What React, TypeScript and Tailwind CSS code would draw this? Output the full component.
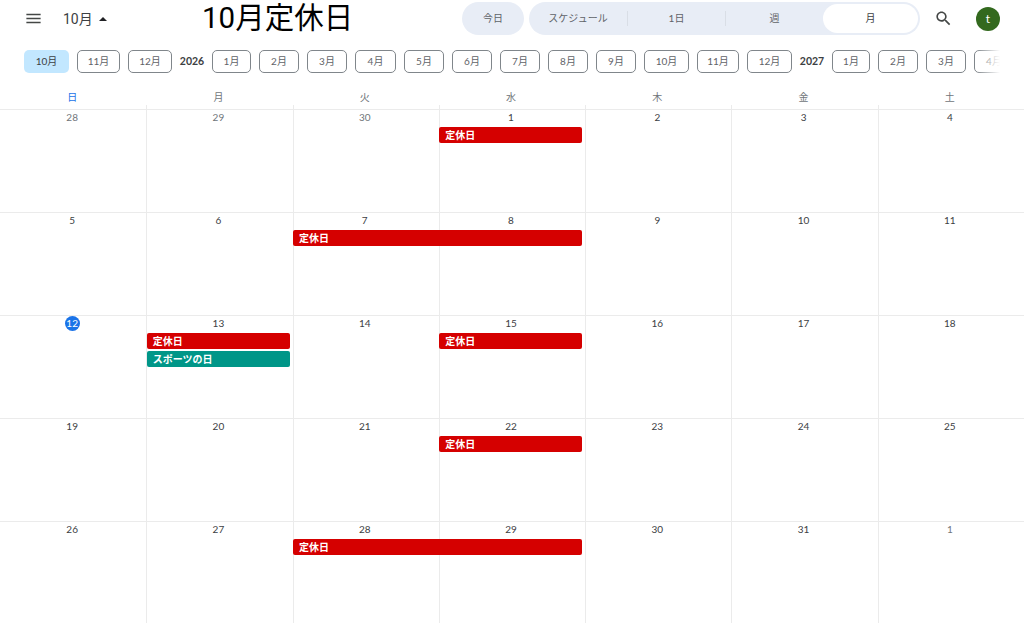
const FONT = "font-['Lato','Noto_Sans_CJK_JP',sans-serif]";

type Chip = { label: string; width: string; year?: boolean; active?: boolean };

const CHIPS: Chip[] = [
  { label: '10月', width: 'w-[45px]', active: true },
  { label: '11月', width: 'w-[43px]' },
  { label: '12月', width: 'w-[44px]' },
  { label: '2026', width: 'w-6', year: true },
  { label: '1月', width: 'w-[39px]' },
  { label: '2月', width: 'w-10' },
  { label: '3月', width: 'w-10' },
  { label: '4月', width: 'w-[41px]' },
  { label: '5月', width: 'w-10' },
  { label: '6月', width: 'w-10' },
  { label: '7月', width: 'w-10' },
  { label: '8月', width: 'w-10' },
  { label: '9月', width: 'w-10' },
  { label: '10月', width: 'w-[45px]' },
  { label: '11月', width: 'w-[42px]' },
  { label: '12月', width: 'w-[45px]' },
  { label: '2027', width: 'w-6', year: true },
  { label: '1月', width: 'w-[38px]' },
  { label: '2月', width: 'w-10' },
  { label: '3月', width: 'w-10' },
  { label: '4月', width: 'w-10' },
];

const WEEKDAYS = ['日', '月', '火', '水', '木', '金', '土'];

type CalEvent = { label: string; col: string; color: string; row: string };

const RED = 'bg-[#d50000]';

const WEEKS: { days: { n: number; muted?: boolean; today?: boolean }[]; events: CalEvent[] }[] = [
  {
    days: [{ n: 28, muted: true }, { n: 29, muted: true }, { n: 30, muted: true }, { n: 1 }, { n: 2 }, { n: 3 }, { n: 4 }],
    events: [{ label: '定休日', col: 'col-start-4 col-span-1', color: RED, row: 'row-start-2' }],
  },
  {
    days: [{ n: 5 }, { n: 6 }, { n: 7 }, { n: 8 }, { n: 9 }, { n: 10 }, { n: 11 }],
    events: [{ label: '定休日', col: 'col-start-3 col-span-2', color: RED, row: 'row-start-2' }],
  },
  {
    days: [{ n: 12, today: true }, { n: 13 }, { n: 14 }, { n: 15 }, { n: 16 }, { n: 17 }, { n: 18 }],
    events: [
      { label: '定休日', col: 'col-start-2 col-span-1', color: RED, row: 'row-start-2' },
      { label: 'スポーツの日', col: 'col-start-2 col-span-1', color: 'bg-[#009688]', row: 'row-start-3' },
      { label: '定休日', col: 'col-start-4 col-span-1', color: RED, row: 'row-start-2' },
    ],
  },
  {
    days: [{ n: 19 }, { n: 20 }, { n: 21 }, { n: 22 }, { n: 23 }, { n: 24 }, { n: 25 }],
    events: [{ label: '定休日', col: 'col-start-4 col-span-1', color: RED, row: 'row-start-2' }],
  },
  {
    days: [{ n: 26 }, { n: 27 }, { n: 28 }, { n: 29 }, { n: 30 }, { n: 31 }, { n: 1, muted: true }],
    events: [{ label: '定休日', col: 'col-start-3 col-span-2', color: RED, row: 'row-start-2' }],
  },
];

const COL_START = ['col-start-1', 'col-start-2', 'col-start-3', 'col-start-4', 'col-start-5', 'col-start-6', 'col-start-7'];

export default function App() {
  return (
    <div className={`${FONT} w-[1024px] h-[623px] overflow-hidden bg-white text-[#3c4043]`}>
      {/* Top bar */}
      <header className="flex items-center h-[37px]">
        <svg className="ml-6 w-[19px] h-[19px] text-[#444746]" viewBox="0 0 24 24" fill="currentColor">
          <path d="M3 18h18v-2H3v2zm0-5h18v-2H3v2zm0-7v2h18V6H3z" />
        </svg>
        <span className="ml-[20px] w-[30px] text-sm text-[#3c4043] font-['Roboto','Noto_Sans_CJK_JP',sans-serif]">10月</span>
        <span className="ml-[6px] w-0 h-0 border-x-4 border-x-transparent border-b-[4px] border-b-[#202124]" />
        <h1 className="ml-[95px] w-[260px] text-[29.5px] leading-none text-black font-['Roboto','Noto_Sans_CJK_JP',sans-serif]">10月定休日</h1>
        <button className="w-[62px] h-[33px] rounded-full bg-[#e8edf6] text-[10px] text-[#5f6368]">今日</button>
        <div className="ml-[5px] w-[391px] h-[33px] rounded-full bg-[#e8edf6] flex items-center text-[10px] text-[#5f6368]">
          <span className="w-[99px] text-center border-r border-[#d9dee6]">スケジュール</span>
          <span className="w-[98px] text-center border-r border-[#d9dee6]">1日</span>
          <span className="w-[97px] text-center">週</span>
          <span className="flex-1 h-[29px] mr-[2px] rounded-full bg-white flex items-center justify-center text-[#3c4043]">月</span>
        </div>
        <svg className="ml-[14px] w-[19px] h-[19px] text-[#444746]" viewBox="0 0 24 24" fill="currentColor">
          <path d="M15.5 14h-.79l-.28-.27C15.41 12.59 16 11.11 16 9.5 16 5.91 13.09 3 9.5 3S3 5.91 3 9.5 5.91 16 9.5 16c1.61 0 3.09-.59 4.23-1.57l.27.28v.79l5 4.99L20.49 19l-4.99-5zm-6 0C7.01 14 5 11.99 5 9.5S7.01 5 9.5 5 14 7.01 14 9.5 11.99 14 9.5 14z" />
        </svg>
        <div className="ml-[23px] w-6 h-6 rounded-full bg-[#33691e] text-white text-xs flex items-center justify-center">t</div>
      </header>

      {/* Month strip */}
      <div className="relative mt-[13px] ml-6 w-[976px] h-[23px] overflow-hidden flex gap-2 items-center">
        {CHIPS.map((c, i) => (
          <span
            key={i}
            className={
              c.year
                ? `${c.width} shrink-0 flex justify-center text-[10.5px] font-bold text-[#3c4043]`
                : c.active
                  ? `${c.width} shrink-0 h-[23px] rounded-[5px] bg-[#c2e7ff] flex items-center justify-center text-[10px] text-[#3c4043]`
                  : `${c.width} shrink-0 h-[23px] rounded-[5px] border border-[#80868b] flex items-center justify-center text-[10px] text-[#5f6368]`
            }
          >
            {c.label}
          </span>
        ))}
        <div className="absolute right-0 top-0 h-full w-6 bg-gradient-to-r from-transparent to-white" />
      </div>

      {/* Weekday header */}
      <div className="grid grid-cols-7 mt-[17px] h-[15px] text-[10px] text-center items-center">
        {WEEKDAYS.map((d, i) => (
          <span key={d} className={`pr-[2px] ${i === 0 ? 'text-[#1a73e8]' : 'text-[#70757a]'}`}>{d}</span>
        ))}
      </div>
      <div className="grid grid-cols-7 h-1">
        {WEEKDAYS.map((d, i) => (
          <div key={d} className={i > 0 ? 'border-l border-[#ebebeb]' : ''} />
        ))}
      </div>

      {/* Weeks */}
      {WEEKS.map((week, w) => (
        <div key={w} className="grid grid-cols-7 grid-rows-[17px_18px_18px_1fr] h-[103px] border-t border-[#ebebeb]">
          {week.days.map((d, i) => (
            <div key={i} className={`${COL_START[i]} row-start-1 row-span-4 ${i > 0 ? 'border-l border-[#ebebeb]' : ''}`} />
          ))}
          {week.days.map((d, i) => (
            <div key={i} className={`${COL_START[i]} row-start-1 flex justify-center items-center pr-[2px] h-[15px] text-[10px] ${d.muted ? 'text-[#70757a]' : 'text-[#3c4043]'}`}>
              {d.today ? (
                <span className="w-[15px] h-[15px] rounded-full bg-[#1a73e8] text-white flex items-center justify-center">{d.n}</span>
              ) : (
                d.n
              )}
            </div>
          ))}
          {week.events.map((e, i) => (
            <div key={i} className={`${e.col} ${e.row} h-4 ml-[0.5px] mr-[3px] rounded-[2px] ${e.color} text-white text-[10px] font-bold flex items-center pl-[6px] z-10`}>
              {e.label}
            </div>
          ))}
        </div>
      ))}
    </div>
  );
}
